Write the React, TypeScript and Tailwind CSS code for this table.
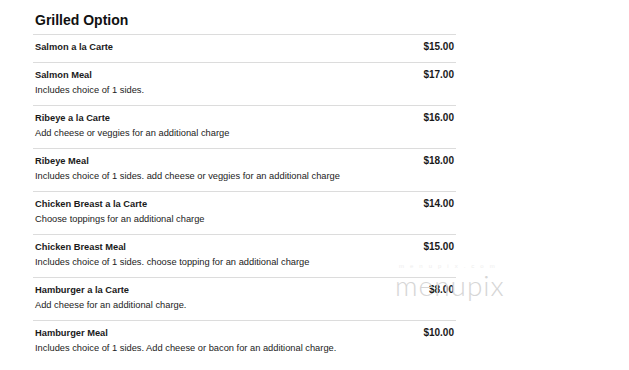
const items = [
  { name: 'Salmon a la Carte', price: '$15.00' },
  { name: 'Salmon Meal', price: '$17.00', desc: 'Includes choice of 1 sides.' },
  { name: 'Ribeye a la Carte', price: '$16.00', desc: 'Add cheese or veggies for an additional charge' },
  { name: 'Ribeye Meal', price: '$18.00', desc: 'Includes choice of 1 sides. add cheese or veggies for an additional charge' },
  { name: 'Chicken Breast a la Carte', price: '$14.00', desc: 'Choose toppings for an additional charge' },
  { name: 'Chicken Breast Meal', price: '$15.00', desc: 'Includes choice of 1 sides. choose topping for an additional charge' },
  { name: 'Hamburger a la Carte', price: '$8.00', desc: 'Add cheese for an additional charge.' },
  { name: 'Hamburger Meal', price: '$10.00', desc: 'Includes choice of 1 sides. Add cheese or bacon for an additional charge.' },
]

export default function App() {
  return (
    <div className="relative h-[370px] w-[629px] overflow-hidden bg-white font-['Liberation_Sans',Arial,sans-serif] text-[#1a1a1a]">
      <div className="ml-[33px] w-[423px] pt-[10px]">
        <h2 className="mb-[4px] pl-[2px] text-[14px] font-bold leading-[20px] text-[#111]">Grilled Option</h2>
        {items.map(item => (
          <div key={item.name} className="border-t border-[#dcdcdc] px-[2px] pt-[5px] pb-[8px]">
            <div className="flex items-start justify-between">
              <span className="text-[9.3px] font-bold leading-[14px]">{item.name}</span>
              <span className="text-[10px] font-bold leading-[14px]">{item.price}</span>
            </div>
            {item.desc && <p className="mt-[2px] text-[9.3px] leading-[13px] text-[#222]">{item.desc}</p>}
          </div>
        ))}
      </div>

      {/* watermark */}
      <div className="pointer-events-none absolute left-[395px] top-[262px] text-center">
        <div className="text-[6px] leading-[8px] tracking-[6px] text-[#eeeeee]">menupix.com</div>
        <div className="font-['Lato',sans-serif] text-[28px] font-light leading-[30px] tracking-[1px] text-[#d6d6d6]">menupix</div>
      </div>
    </div>
  )
}
